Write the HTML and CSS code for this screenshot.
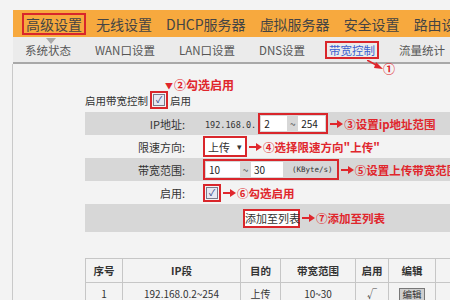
FILE: index.html
```html
<!DOCTYPE html>
<html lang="zh">
<head>
<meta charset="utf-8">
<link rel="stylesheet" href="styles.css">
</head>
<body>
<div class="page">
  <div class="mainnav">
    <span class="mtab active">高级设置</span>
    <span class="mtab">无线设置</span>
    <span class="mtab">DHCP服务器</span>
    <span class="mtab">虚拟服务器</span>
    <span class="mtab">安全设置</span>
    <span class="mtab">路由设置</span>
  </div>
  <div class="subnav">
    <span class="stab">系统状态</span>
    <span class="stab">WAN口设置</span>
    <span class="stab">LAN口设置</span>
    <span class="stab">DNS设置</span>
    <span class="stab current">带宽控制<span class="note1"><svg class="diag" width="16" height="10" viewBox="0 0 16 10"><line x1="0" y1="0" x2="11" y2="6" stroke="#e0262c" stroke-width="1.6"/><polygon points="9,2 16,9 7,8" fill="#e0262c"/></svg><span class="num">①</span></span></span>
    <span class="stab">流量统计</span>
  </div>
  <div class="content">
    <div class="note2"><span class="down">▼</span>②勾选启用</div>
    <div class="enable">启用带宽控制 <span class="redbox"><span class="cb">✓</span></span> 启用</div>
    <div class="form">
      <div class="row gray">
        <div class="lbl">IP地址:</div>
        <div class="val">
          <span class="ip">192.168.0.</span>
          <span class="redbox pad"><span class="inp w26">2</span><span class="tilde">~</span><span class="inp w27">254</span></span>
          <span class="ann"><svg class="arr" width="13" height="8" viewBox="0 0 13 8"><line x1="0" y1="4" x2="8" y2="4" stroke="#e0262c" stroke-width="2"/><polygon points="7,0 13,4 7,8" fill="#e0262c"/></svg>③设置ip地址范围</span>
        </div>
      </div>
      <div class="row">
        <div class="lbl">限速方向:</div>
        <div class="val">
          <span class="redbox"><span class="sel">上传 <span class="caret">▾</span></span></span>
          <span class="ann"><svg class="arr" width="13" height="8" viewBox="0 0 13 8"><line x1="0" y1="4" x2="8" y2="4" stroke="#e0262c" stroke-width="2"/><polygon points="7,0 13,4 7,8" fill="#e0262c"/></svg>④选择限速方向"上传"</span>
        </div>
      </div>
      <div class="row gray">
        <div class="lbl">带宽范围:</div>
        <div class="val">
          <span class="redbox pad"><span class="inp w34">10</span><span class="tilde">~</span><span class="inp w32">30</span><span class="unit">(KByte/s)</span></span>
          <span class="ann"><svg class="arr" width="13" height="8" viewBox="0 0 13 8"><line x1="0" y1="4" x2="8" y2="4" stroke="#e0262c" stroke-width="2"/><polygon points="7,0 13,4 7,8" fill="#e0262c"/></svg>⑤设置上传带宽范围</span>
        </div>
      </div>
      <div class="row">
        <div class="lbl">启用:</div>
        <div class="val">
          <span class="redbox"><span class="cb">✓</span></span>
          <span class="ann"><svg class="arr" width="13" height="8" viewBox="0 0 13 8"><line x1="0" y1="4" x2="8" y2="4" stroke="#e0262c" stroke-width="2"/><polygon points="7,0 13,4 7,8" fill="#e0262c"/></svg>⑥勾选启用</span>
        </div>
      </div>
      <div class="row gray tall">
        <div class="lbl"></div>
        <div class="val">
          <span class="btn">添加至列表</span>
          <span class="ann"><svg class="arr" width="13" height="8" viewBox="0 0 13 8"><line x1="0" y1="4" x2="8" y2="4" stroke="#e0262c" stroke-width="2"/><polygon points="7,0 13,4 7,8" fill="#e0262c"/></svg>⑦添加至列表</span>
        </div>
      </div>
    </div>
    <table class="list">
      <colgroup>
        <col class="c1"><col class="c2"><col class="c3"><col class="c4"><col class="c5"><col class="c6"><col class="c7">
      </colgroup>
      <tr><th>序号</th><th>IP段</th><th>目的</th><th>带宽范围</th><th>启用</th><th>编辑</th><th>删除</th></tr>
      <tr><td>1</td><td>192.168.0.2~254</td><td>上传</td><td>10~30</td><td class="chk">√</td><td><span class="ebtn">编辑</span></td><td><span class="ebtn">删除</span></td></tr>
    </table>
  </div>
</div>
</body>
</html>
```
FILE: styles.css
```css
html, body {
  margin: 0;
  padding: 0;
  width: 450px;
  height: 300px;
  overflow: hidden;
  background: #f3f3f3;
  font-family: "Noto Sans CJK SC", "Noto Sans", sans-serif;
  color: #333;
}
.page {
  padding-top: 10px;
  width: 600px;
}
.mainnav {
  margin-left: 13px;
  height: 27px;
  background: #f7a93e;
  display: flex;
  align-items: center;
  gap: 6px;
  padding-left: 9px;
  white-space: nowrap;
}
.mtab {
  position: relative;
  font-size: 14px;
  line-height: 14px;
  padding: 2px 2px;
  border: 2px solid transparent;
  color: #444;
}
.mtab.active {
  border-color: #d9262b;
}
.mtab.active::after {
  content: "";
  position: absolute;
  left: 22px;
  top: 23px;
  border-left: 5px solid transparent;
  border-right: 5px solid transparent;
  border-top: 6px solid #a9a9a9;
}
.subnav {
  margin-left: 13px;
  height: 25px;
  background: #ebebeb;
  border-bottom: 2px solid #a8a8a8;
  display: flex;
  align-items: center;
  gap: 16px;
  padding-left: 8px;
  white-space: nowrap;
}
.stab {
  position: relative;
  font-size: 11.5px;
  line-height: 12px;
  padding: 1px 2px;
  border: 2px solid transparent;
  color: #555;
}
.stab.current {
  border-color: #d9262b;
  color: #3c5fd0;
}
.note1 {
  position: absolute;
  left: 40px;
  top: 16px;
  display: flex;
  align-items: flex-start;
}
.diag { margin-top: 1px; }
.num {
  color: #e0262c;
  font-size: 12px;
  line-height: 12px;
  font-weight: bold;
  margin-top: 4px;
}
.content {
  margin-left: 12px;
  border-left: 1px solid #c9c9c9;
  padding-left: 72px;
  padding-top: 14px;
  width: 515px;
}
.note2 {
  height: 14px;
  line-height: 14px;
  padding-left: 80px;
  color: #e0262c;
  font-weight: bold;
  font-size: 12px;
  white-space: nowrap;
}
.down {
  font-size: 8px;
  vertical-align: 1px;
  margin-right: 1px;
}
.enable {
  height: 16px;
  display: flex;
  align-items: center;
  gap: 2px;
  font-size: 10.5px;
  margin-bottom: 4px;
  white-space: nowrap;
}
.redbox {
  display: inline-flex;
  align-items: center;
  border: 2px solid #d9262b;
  box-sizing: border-box;
}
.redbox.pad {
  padding: 1px 1px;
}
.cb {
  display: inline-block;
  width: 10px;
  height: 10px;
  border: 1px solid #7a7a8a;
  background: #e6e9f2;
  font-size: 9px;
  line-height: 10px;
  text-align: center;
  color: #2c3c80;
  margin: 1px;
}
.row {
  display: grid;
  grid-template-columns: 105px 1fr;
  height: 23px;
  align-items: center;
  font-size: 11px;
  white-space: nowrap;
}
.row.gray { background: #d7d7d7; }
.row.tall { height: 28px; }
.lbl {
  text-align: right;
  padding-right: 5px;
}
.val {
  display: flex;
  align-items: center;
  padding-left: 13px;
}
.ip {
  font-family: "DejaVu Sans Mono", monospace;
  font-size: 8.5px;
  letter-spacing: 0;
  margin-left: 2px;
  margin-right: 2px;
  padding-top: 2px;
}
.inp {
  display: inline-block;
  height: 15px;
  line-height: 15px;
  background: #fff;
  font-size: 10px;
  padding-left: 3px;
  box-sizing: border-box;
  color: #222;
}
.w26 { width: 26px; }
.w27 { width: 27px; }
.w34 { width: 34px; }
.w32 { width: 32px; }
.tilde {
  width: 11px;
  text-align: center;
  font-size: 10px;
  color: #555;
}
.unit {
  font-family: "DejaVu Sans Mono", monospace;
  font-size: 7.5px;
  margin-left: 9px;
  margin-right: 3px;
  color: #333;
}
.sel {
  display: inline-flex;
  align-items: center;
  justify-content: space-between;
  width: 40px;
  height: 17px;
  background: #fff;
  font-size: 11px;
  padding: 0 3px;
  box-sizing: border-box;
}
.caret { font-size: 9px; }
.ann {
  display: inline-flex;
  align-items: center;
  gap: 1px;
  margin-left: 2px;
  color: #e0262c;
  font-weight: bold;
  font-size: 11.5px;
}
.btn {
  margin-left: 40px;
  display: inline-block;
  width: 57px;
  height: 19px;
  line-height: 15px;
  border: 2px solid #d9262b;
  background: #fff;
  font-size: 11px;
  text-align: center;
  box-sizing: border-box;
}
.list {
  margin-top: 26px;
  border-collapse: collapse;
  table-layout: fixed;
  width: 430px;
  font-size: 10px;
}
.c1 { width: 37px; }
.c2 { width: 118px; }
.c3 { width: 40px; }
.c4 { width: 75px; }
.c5 { width: 33px; }
.c6 { width: 47px; }
.c7 { width: 80px; }
.list th, .list td {
  border: 1px solid #c6c6c6;
  text-align: center;
  padding: 0;
  white-space: nowrap;
}
.list th {
  height: 23px;
  font-weight: bold;
  font-size: 10.5px;
}
.list td { height: 20px; }
.chk { font-size: 10px; color: #444; }
.ebtn {
  display: inline-block;
  background: #cfcfcf;
  border: 1px solid #777;
  font-size: 9.5px;
  line-height: 11px;
  padding: 0 2px;
}
```
